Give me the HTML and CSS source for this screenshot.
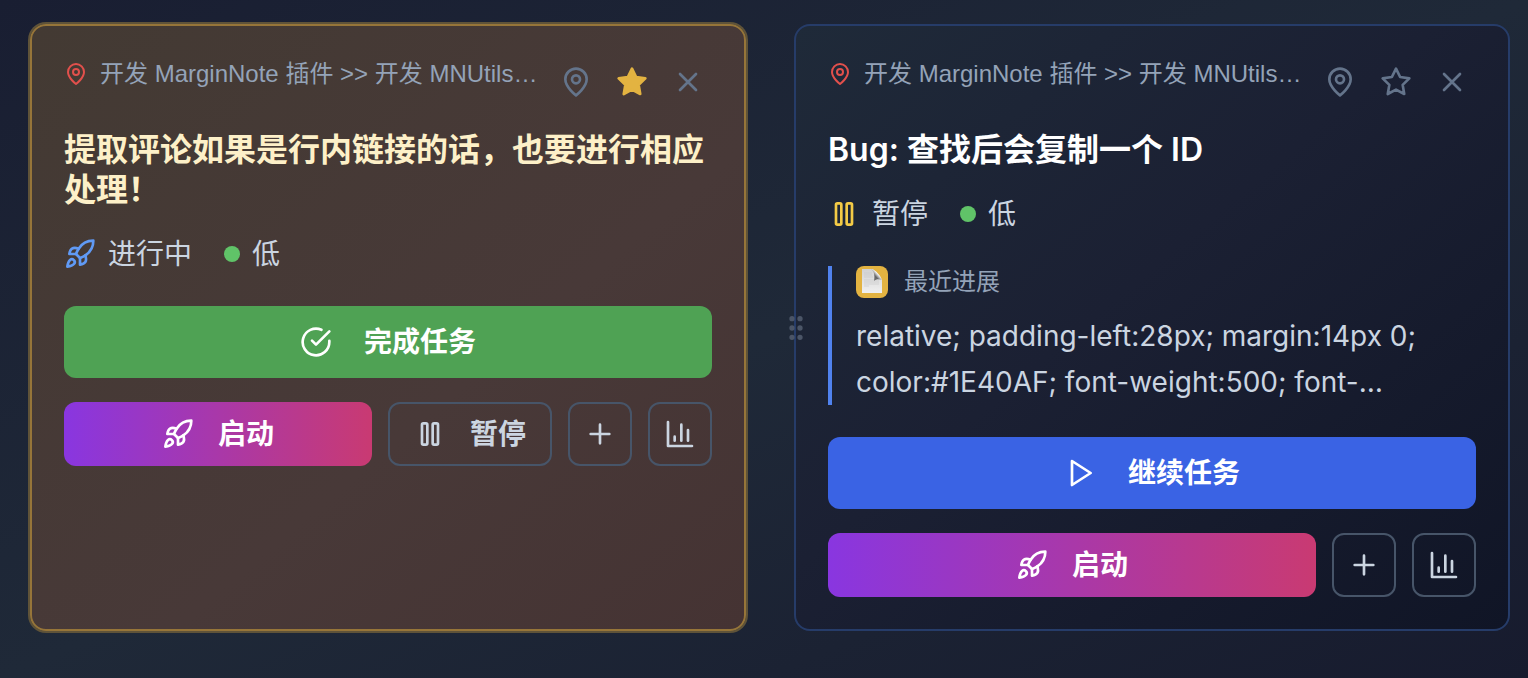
FILE: index.html
```html
<!DOCTYPE html>
<html lang="zh-CN">
<head>
<meta charset="utf-8">
<meta name="viewport" content="width=device-width, initial-scale=1">
<title>任务看板</title>
<link rel="stylesheet" href="styles.css">
</head>
<body>
<svg class="sprite" aria-hidden="true">
  <symbol id="pin" viewBox="0 0 24 24"><path d="M20 10c0 6-8 12-8 12s-8-6-8-12a8 8 0 0 1 16 0Z"/><circle cx="12" cy="10" r="3"/></symbol>
  <symbol id="star" viewBox="0 0 24 24"><polygon points="12 2 15.09 8.26 22 9.27 17 14.14 18.18 21.02 12 17.77 5.82 21.02 7 14.14 2 9.27 8.91 8.26 12 2"/></symbol>
  <symbol id="close" viewBox="0 0 24 24"><path d="M18 6 6 18M6 6l12 12"/></symbol>
  <symbol id="rocket" viewBox="0 0 24 24"><path d="M4.5 16.5c-1.5 1.26-2 5-2 5s3.74-.5 5-2c.71-.84.7-2.13-.09-2.91a2.18 2.18 0 0 0-2.91-.09z"/><path d="m12 15-3-3a22 22 0 0 1 2-3.95A12.88 12.88 0 0 1 22 2c0 2.72-.78 7.5-6 11a22.35 22.35 0 0 1-4 2z"/><path d="M9 12H4s.55-3.03 2-4c1.62-1.08 5 0 5 0"/><path d="M12 15v5s3.03-.55 4-2c1.08-1.62 0-5 0-5"/></symbol>
  <symbol id="pause" viewBox="0 0 24 24"><rect x="14" y="4" width="4" height="16" rx="1"/><rect x="6" y="4" width="4" height="16" rx="1"/></symbol>
  <symbol id="check" viewBox="0 0 24 24"><path d="M22 11.08V12a10 10 0 1 1-5.93-9.14"/><path d="m9 11 3 3L22 4"/></symbol>
  <symbol id="play" viewBox="0 0 24 24"><polygon points="6 3 20 12 6 21 6 3"/></symbol>
  <symbol id="plus" viewBox="0 0 24 24"><path d="M5 12h14M12 5v14"/></symbol>
  <symbol id="chart" viewBox="0 0 24 24"><path d="M3 3v18h18M18 17V9M13 17V5M8 17v-3"/></symbol>
  <symbol id="grip" viewBox="0 0 24 24"><circle cx="9" cy="5" r="1"/><circle cx="9" cy="12" r="1"/><circle cx="9" cy="19" r="1"/><circle cx="15" cy="5" r="1"/><circle cx="15" cy="12" r="1"/><circle cx="15" cy="19" r="1"/></symbol>
</svg>

<main class="board">
  <article class="card card-focus">
    <header class="card-head">
      <p class="path"><svg class="icon icon-small path-pin"><use href="#pin"/></svg><span class="path-text">开发 MarginNote 插件 &gt;&gt; 开发 MNUtils…</span></p>
      <div class="tools">
        <button class="tool" type="button" aria-label="定位"><svg class="icon"><use href="#pin"/></svg></button>
        <button class="tool tool-starred" type="button" aria-label="取消焦点"><svg class="icon"><use href="#star"/></svg></button>
        <button class="tool" type="button" aria-label="关闭"><svg class="icon"><use href="#close"/></svg></button>
      </div>
    </header>
    <h2 class="title">提取评论如果是行内链接的话，也要进行相应处理！</h2>
    <div class="meta">
      <span class="meta-item"><svg class="icon state-running"><use href="#rocket"/></svg>进行中</span>
      <span class="meta-item"><i class="dot"></i>低</span>
    </div>
    <button class="btn btn-main btn-done" type="button"><svg class="icon"><use href="#check"/></svg>完成任务</button>
    <div class="actions">
      <button class="btn btn-launch" type="button"><svg class="icon"><use href="#rocket"/></svg>启动</button>
      <button class="btn btn-outline" type="button"><svg class="icon"><use href="#pause"/></svg>暂停</button>
      <button class="btn btn-outline btn-square" type="button" aria-label="添加"><svg class="icon"><use href="#plus"/></svg></button>
      <button class="btn btn-outline btn-square" type="button" aria-label="统计"><svg class="icon"><use href="#chart"/></svg></button>
    </div>
  </article>

  <article class="card card-plain">
    <svg class="icon grip"><use href="#grip"/></svg>
    <header class="card-head">
      <p class="path"><svg class="icon icon-small path-pin"><use href="#pin"/></svg><span class="path-text">开发 MarginNote 插件 &gt;&gt; 开发 MNUtils…</span></p>
      <div class="tools">
        <button class="tool" type="button" aria-label="定位"><svg class="icon"><use href="#pin"/></svg></button>
        <button class="tool" type="button" aria-label="设为焦点"><svg class="icon"><use href="#star"/></svg></button>
        <button class="tool" type="button" aria-label="关闭"><svg class="icon"><use href="#close"/></svg></button>
      </div>
    </header>
    <h2 class="title">Bug: 查找后会复制一个 ID</h2>
    <div class="meta">
      <span class="meta-item"><svg class="icon state-paused"><use href="#pause"/></svg>暂停</span>
      <span class="meta-item"><i class="dot"></i>低</span>
    </div>
    <section class="progress">
      <h3 class="progress-label">
        <svg class="note" viewBox="0 0 32 32" aria-hidden="true">
          <defs>
            <linearGradient id="paper" x1="0" y1="0" x2="0" y2="1"><stop offset="0" stop-color="#d2d2d2"/><stop offset="1" stop-color="#f0f0f0"/></linearGradient>
            <linearGradient id="fold" x1="0" y1="1" x2="1" y2="0"><stop offset="0" stop-color="#777"/><stop offset=".4" stop-color="#666"/><stop offset=".6" stop-color="#f4f4f4"/><stop offset="1" stop-color="#eee"/></linearGradient>
          </defs>
          <rect width="32" height="32" rx="8" fill="#e3b341"/>
          <path d="M6 3h11l9 11v13H6z" fill="url(#paper)"/>
          <path d="M8 7h8M8 9h8M8 11h9M8 14h15M8 16h15M8 18h15M8 20h5" stroke="#c6c6c6" stroke-width=".6"/>
          <path d="M15 3c3 2 4 6 3 12 2-2 5-2 8-1-1-4-6-10-11-11z" fill="url(#fold)"/>
        </svg>最近进展
      </h3>
      <p class="progress-text">relative; padding-left:28px; margin:14px 0; color:#1E40AF; font-weight:500; font-…</p>
    </section>
    <button class="btn btn-main btn-resume" type="button"><svg class="icon"><use href="#play"/></svg>继续任务</button>
    <div class="actions">
      <button class="btn btn-launch" type="button"><svg class="icon"><use href="#rocket"/></svg>启动</button>
      <button class="btn btn-outline btn-square" type="button" aria-label="添加"><svg class="icon"><use href="#plus"/></svg></button>
      <button class="btn btn-outline btn-square" type="button" aria-label="统计"><svg class="icon"><use href="#chart"/></svg></button>
    </div>
  </article>
</main>
</body>
</html>
```
FILE: styles.css
```css
* {
  box-sizing: border-box;
  margin: 0;
}

body {
  min-height: 100vh;
  background: linear-gradient(to bottom right, #191e32 0%, #1f2938 50%, #171b2e 100%);
  color: #cbd5e1;
  font-family: Inter, "Noto Sans CJK SC", sans-serif;
  font-size: 28px;
  line-height: 40px;
}

.sprite {
  display: none;
}

.icon {
  flex: none;
  width: 32px;
  height: 32px;
  fill: none;
  stroke: currentColor;
  stroke-width: 2;
  stroke-linecap: round;
  stroke-linejoin: round;
}

.icon-small {
  width: 24px;
  height: 24px;
}

.board {
  display: grid;
  grid-template-columns: repeat(2, minmax(0, 1fr));
  gap: 48px;
  padding: 24px 18px 24px 30px;
}

.card {
  position: relative;
  padding: 32px;
  border: 2px solid;
  border-radius: 16px;
}

.card-focus {
  border-color: #967539;
  background: linear-gradient(to bottom right, #433a33, #483938 60%, #453333);
  box-shadow: 0 0 0 2px #5f5339;
}

.card-plain {
  border-color: #263c69;
  background: linear-gradient(to bottom right, #1f2a39, #1b2033 45%, #101526);
}

.grip {
  position: absolute;
  top: 50%;
  left: -16px;
  margin-top: -16px;
  color: #4b5567;
}

.card-head {
  display: flex;
  align-items: flex-start;
  gap: 12px;
  margin-bottom: 24px;
}

.path {
  display: flex;
  flex: 1;
  align-items: center;
  gap: 12px;
  min-width: 0;
  color: #94a3b8;
  font-family: "Liberation Sans", "Noto Sans CJK SC", sans-serif;
  font-size: 24px;
  line-height: 32px;
}

.path-text {
  overflow: hidden;
  text-overflow: ellipsis;
  white-space: nowrap;
}

.path-pin {
  color: #e2504c;
}

.tools {
  display: flex;
  gap: 8px;
}

.tool {
  display: grid;
  place-items: center;
  width: 48px;
  height: 48px;
  padding: 0;
  border: 0;
  background: none;
  color: #64748b;
}

.tool-starred {
  color: #e3b341;
}

.tool-starred .icon {
  fill: currentColor;
}

.title {
  margin-bottom: 24px;
  color: #fff;
  font-size: 32px;
  font-weight: 600;
  line-height: 40px;
}

.card-focus .title {
  color: #fdf0c8;
}

.meta {
  display: flex;
  gap: 32px;
  margin-bottom: 32px;
}

.meta-item {
  display: flex;
  align-items: center;
  gap: 12px;
}

.state-running {
  color: #609af5;
}

.state-paused {
  color: #f4cb46;
}

.dot {
  width: 16px;
  height: 16px;
  border-radius: 50%;
  background: #60c368;
}

.progress {
  margin-bottom: 32px;
  padding-left: 24px;
  border-left: 4px solid #5082ee;
}

.progress-label {
  display: flex;
  align-items: center;
  gap: 16px;
  margin-bottom: 15px;
  color: #94a3b8;
  font-size: 24px;
  font-weight: 400;
  line-height: 32px;
}

.note {
  width: 32px;
  height: 32px;
}

.progress-text {
  line-height: 46px;
}

.btn {
  display: flex;
  align-items: center;
  justify-content: center;
  gap: 24px;
  height: 64px;
  padding: 0 24px;
  border: 0;
  border-radius: 12px;
  color: #fff;
  font: inherit;
  font-weight: 600;
}

.btn-main {
  gap: 32px;
  width: 100%;
  height: 72px;
  margin-bottom: 24px;
}

.btn-done {
  background: #4fa254;
}

.btn-resume {
  background: #3a63e4;
}

.btn-launch {
  flex: 1;
  background: linear-gradient(90deg, #8936e0, #c93a72);
}

.btn-outline {
  border: 2px solid #475569;
  background: none;
  color: #cbd5e1;
}

.btn-square {
  width: 64px;
  padding: 0;
}

.actions {
  display: flex;
  gap: 16px;
}
```
